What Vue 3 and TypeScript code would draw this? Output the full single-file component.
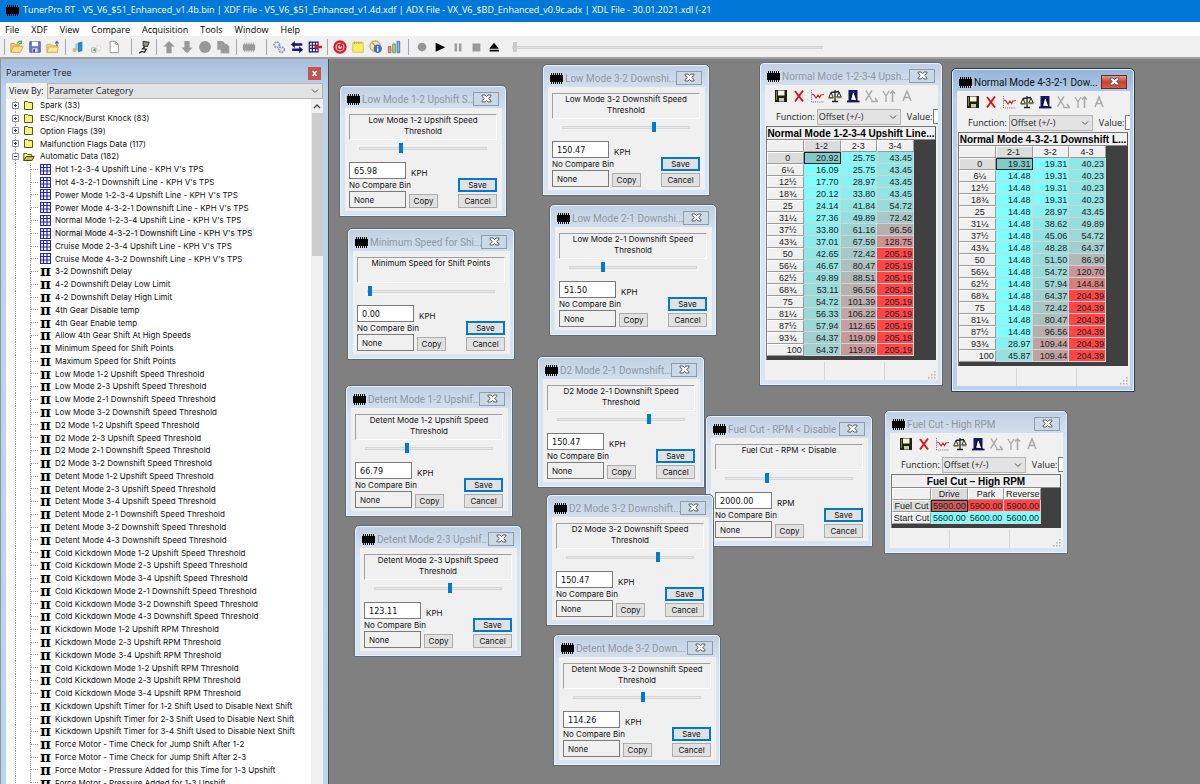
<script setup lang="ts">
import { ref } from 'vue'

interface Dialog {
  title: string
  label: string
  x: number
  y: number
  value: string
  unit: string
  slider: number
}

interface TableWindow {
  title: string
  caption: string
  x: number
  y: number
  active: boolean
  named: boolean
  columns: string[]
  rows: { label: string; values: number[] }[]
}

const menus = ['File', 'XDF', 'View', 'Compare', 'Acquisition', 'Tools', 'Window', 'Help']

const folders = [
  'Spark (33)',
  'ESC/Knock/Burst Knock (83)',
  'Option Flags (39)',
  'Malfunction Flags Data (117)',
]

const tableItems = [
  "Hot 1-2-3-4 Upshift Line - KPH V's TPS",
  "Hot 4-3-2-1 Downshift Line - KPH V's TPS",
  "Power Mode 1-2-3-4 Upshift Line - KPH V's TPS",
  "Power Mode 4-3-2-1 Downshift Line - KPH V's TPS",
  "Normal Mode 1-2-3-4 Upshift Line - KPH V's TPS",
  "Normal Mode 4-3-2-1 Downshift Line - KPH V's TPS",
  "Cruise Mode 2-3-4 Upshift Line - KPH V's TPS",
  "Cruise Mode 4-3-2 Downshift Line - KPH V's TPS",
]

const scalarItems = [
  '3-2 Downshift Delay',
  '4-2 Downshift Delay Low Limit',
  '4-2 Downshift Delay High Limit',
  '4th Gear Disable temp',
  '4th Gear Enable temp',
  'Allow 4th Gear Shift At High Speeds',
  'Minimum Speed for Shift Points',
  'Maximum Speed for Shift Points',
  'Low Mode 1-2 Upshift Speed Threshold',
  'Low Mode 2-3 Upshift Speed Threshold',
  'Low Mode 2-1 Downshift Speed Threshold',
  'Low Mode 3-2 Downshift Speed Threshold',
  'D2 Mode 1-2 Upshift Speed Threshold',
  'D2 Mode 2-3 Upshift Speed Threshold',
  'D2 Mode 2-1 Downshift Speed Threshold',
  'D2 Mode 3-2 Downshift Speed Threshold',
  'Detent Mode 1-2 Upshift Speed Threshold',
  'Detent Mode 2-3 Upshift Speed Threshold',
  'Detent Mode 3-4 Upshift Speed Threshold',
  'Detent Mode 2-1 Downshift Speed Threshold',
  'Detent Mode 3-2 Downshift Speed Threshold',
  'Detent Mode 4-3 Downshift Speed Threshold',
  'Cold Kickdown Mode 1-2 Upshift Speed Threshold',
  'Cold Kickdown Mode 2-3 Upshift Speed Threshold',
  'Cold Kickdown Mode 3-4 Upshift Speed Threshold',
  'Cold Kickdown Mode 2-1 Downshift Speed Threshold',
  'Cold Kickdown Mode 3-2 Downshift Speed Threshold',
  'Cold Kickdown Mode 4-3 Downshift Speed Threshold',
  'Kickdown Mode 1-2 Upshift RPM Threshold',
  'Kickdown Mode 2-3 Upshift RPM Threshold',
  'Kickdown Mode 3-4 Upshift RPM Threshold',
  'Cold Kickdown Mode 1-2 Upshift RPM Threshold',
  'Cold Kickdown Mode 2-3 Upshift RPM Threshold',
  'Cold Kickdown Mode 3-4 Upshift RPM Threshold',
  'Kickdown Upshift Timer for 1-2 Shift Used to Disable Next Shift',
  'Kickdown Upshift Timer for 2-3 Shift Used to Disable Next Shift',
  'Kickdown Upshift Timer for 3-4 Shift Used to Disable Next Shift',
  'Force Motor - Time Check for Jump Shift After 1-2',
  'Force Motor - Time Check for Jump Shift After 2-3',
  'Force Motor - Pressure Added for this Time for 1-3 Upshift',
  'Force Motor - Pressure Added for 1-3 Upshift',
]

const selected = ref(tableItems[5])

const dialogs = ref<Dialog[]>([
  { title: 'Low Mode 1-2 Upshift S...', label: 'Low Mode 1-2 Upshift Speed Threshold', x: 339, y: 85, value: '65.98', unit: 'KPH', slider: 32 },
  { title: 'Minimum Speed for Shi...', label: 'Minimum Speed for Shift Points', x: 347, y: 228, value: '0.00', unit: 'KPH', slider: 0 },
  { title: 'Detent Mode 1-2 Upshif...', label: 'Detent Mode 1-2 Upshift Speed Threshold', x: 345, y: 385, value: '66.79', unit: 'KPH', slider: 32 },
  { title: 'Detent Mode 2-3 Upshif...', label: 'Detent Mode 2-3 Upshift Speed Threshold', x: 354, y: 525, value: '123.11', unit: 'KPH', slider: 60 },
  { title: 'Low Mode 3-2 Downshi...', label: 'Low Mode 3-2 Downshift Speed Threshold', x: 542, y: 64, value: '150.47', unit: 'KPH', slider: 73 },
  { title: 'Low Mode 2-1 Downshi...', label: 'Low Mode 2-1 Downshift Speed Threshold', x: 549, y: 204, value: '51.50', unit: 'KPH', slider: 25 },
  { title: 'Fuel Cut - RPM < Disable', label: 'Fuel Cut - RPM < Disable', x: 705, y: 415, value: '2000.00', unit: 'RPM', slider: 32 },
  { title: 'D2 Mode 2-1 Downshift...', label: 'D2 Mode 2-1 Downshift Speed Threshold', x: 537, y: 356, value: '150.47', unit: 'KPH', slider: 73 },
  { title: 'D2 Mode 3-2 Downshift...', label: 'D2 Mode 3-2 Downshift Speed Threshold', x: 546, y: 494, value: '150.47', unit: 'KPH', slider: 73 },
  { title: 'Detent Mode 3-2 Down...', label: 'Detent Mode 3-2 Downshift Speed Threshold', x: 553, y: 634, value: '114.26', unit: 'KPH', slider: 55 },
])

const throttle = ['0', '6¼', '12½', '18¾', '25', '31¼', '37½', '43¾', '50', '56¼', '62½', '68¾', '75', '81¼', '87½', '93¾', '100']

const upshift = [
  [20.92, 25.75, 43.45], [16.09, 25.75, 43.45], [17.7, 28.97, 43.45], [20.12, 33.8, 43.45],
  [24.14, 41.84, 54.72], [27.36, 49.89, 72.42], [33.8, 61.16, 96.56], [37.01, 67.59, 128.75],
  [42.65, 72.42, 205.19], [46.67, 80.47, 205.19], [49.89, 88.51, 205.19], [53.11, 96.56, 205.19],
  [54.72, 101.39, 205.19], [56.33, 106.22, 205.19], [57.94, 112.65, 205.19], [64.37, 119.09, 205.19],
  [64.37, 119.09, 205.19],
]

const downshift = [
  [19.31, 19.31, 40.23], [14.48, 19.31, 40.23], [14.48, 19.31, 40.23], [14.48, 19.31, 40.23],
  [14.48, 28.97, 43.45], [14.48, 38.62, 49.89], [14.48, 45.06, 54.72], [14.48, 48.28, 64.37],
  [14.48, 51.5, 86.9], [14.48, 54.72, 120.7], [14.48, 57.94, 144.84], [14.48, 64.37, 204.39],
  [14.48, 72.42, 204.39], [14.48, 80.47, 204.39], [14.48, 96.56, 204.39], [28.97, 109.44, 204.39],
  [45.87, 109.44, 204.39],
]

const byThrottle = (data: number[][]) => throttle.map((label, i) => ({ label, values: data[i] }))

const tables: TableWindow[] = [
  {
    title: 'Normal Mode 1-2-3-4 Upsh...', caption: 'Normal Mode 1-2-3-4 Upshift Line...',
    x: 759, y: 62, active: false, named: false, columns: ['1-2', '2-3', '3-4'], rows: byThrottle(upshift),
  },
  {
    title: 'Normal Mode 4-3-2-1 Dow...', caption: 'Normal Mode 4-3-2-1 Downshift L...',
    x: 951, y: 68, active: true, named: false, columns: ['2-1', '3-2', '4-3'], rows: byThrottle(downshift),
  },
  {
    title: 'Fuel Cut - High RPM', caption: 'Fuel Cut – High RPM',
    x: 884, y: 410, active: false, named: true, columns: ['Drive', 'Park', 'Reverse'],
    rows: [
      { label: 'Fuel Cut', values: [5900, 5900, 5900] },
      { label: 'Start Cut', values: [5600, 5600, 5600] },
    ],
  },
]

// The canvas begins right of the tree panel and below the toolbar.
const place = (w: { x: number; y: number }) => ({ left: `${w.x - 329}px`, top: `${w.y - 59}px` })

// Cells run from cyan at the table's minimum to red at its maximum; the current cell is greyed.
function heat(t: TableWindow, value: number, current: boolean) {
  const all = t.rows.flatMap((r) => r.values)
  const lo = Math.min(...all)
  const share = (value - lo) / (Math.max(...all) - lo)
  const tone = (c: number) => Math.round(current ? c * 0.6 + 51 : c)
  const r = tone(128 + 127 * share)
  const g = tone(255 - 185 * share)
  return { backgroundColor: `rgb(${r}, ${g}, ${g})` }
}
</script>

<template>
  <div class="app">
    <svg class="defs" aria-hidden="true">
      <symbol id="chip" viewBox="0 0 13 11">
        <path d="M0 2h13v7H0z" fill="#000" />
        <path d="M1.500 0v11M3.500 0v11M5.500 0v11M7.500 0v11M9.500 0v11M11.500 0v11" stroke="#000" />
      </symbol>
      <symbol id="chev" viewBox="0 0 8 5"><path d="M1 .5l3 3 3-3" fill="none" stroke="#555" /></symbol>
      <symbol id="cross" viewBox="0 0 11 9">
        <path d="M1 1h3l1.500 1.700L7 1h3v1.300L7.600 4.500 10 6.700V8H7L5.500 6.300 4 8H1V6.700l2.400-2.200L1 2.300z" fill="#fff" stroke="#4b5360" stroke-width=".9" />
      </symbol>
    </svg>

    <header class="titlebar">
      <svg width="13" height="11"><use href="#chip" /></svg>
      <h1>TunerPro RT - VS_V6_$51_Enhanced_v1.4b.bin | XDF File - VS_V6_$51_Enhanced_v1.4d.xdf | ADX File - VX_V6_$BD_Enhanced_v0.9c.adx | XDL File - 30.01.2021.xdl (-21</h1>
    </header>

    <nav class="menubar"><button v-for="m in menus" :key="m" type="button">{{ m }}</button></nav>

    <div class="toolbar">
      <i class="sep s7"></i>
      <button type="button" aria-label="Open"><svg viewBox="0 0 16 16"><path d="M1 14V4h4l1 1.500h5V7" fill="#f3cf68" stroke="#c99b3b" /><path d="M1 14l3-7h11l-3 7z" fill="#fbe08a" stroke="#cf9f3c" /><path d="M8 4c2-3 4-3 5-1M13 .5V4h-3" fill="none" stroke="#4f9e4b" stroke-width="1.300" /></svg></button>
      <button type="button" aria-label="Save"><svg viewBox="0 0 16 16"><path d="M2 2h12v12H2z" fill="#6c78c8" stroke="#4c569f" /><path d="M4.500 2h7v5h-7z" fill="#fff" /><path d="M5 9.500h6V14H5z" fill="#d6d9e6" /><path d="M6 10.500h2V14H6z" fill="#414a80" /></svg></button>
      <button type="button" aria-label="Close file"><svg viewBox="0 0 16 16"><path d="M1 14V5h5l1 1.500h6V14z" fill="#f7d777" stroke="#d3a548" /><path d="M1 14l2-6h11l-1 6z" fill="#fde69d" stroke="#d8ad50" /><path d="M12.500 7V2M10.500 4l2-2.500 2 2.500" fill="none" stroke="#4a62bd" stroke-width="1.300" /></svg></button>
      <i class="sep s7"></i>
      <button type="button" aria-label="Compare bin"><svg viewBox="0 0 16 16"><path d="M8 3l5-1.500v11L8 14z" fill="#2d86c8" /><path d="M5 4l3-1v10l-3-2z" fill="#8fd0ee" /><path d="M2 9h4v5l-4-1z" fill="#d9b77a" /></svg></button>
      <button type="button" aria-label="Transfer"><svg viewBox="0 0 16 16"><path d="M3 9h5v5H3z" fill="#f6f6f6" stroke="#aaa" /><path d="M4 12l4 1-1-4z" fill="#4fae4c" /><path d="M9 6l4 1v5h-3z" fill="#fff" stroke="#d0d0d0" stroke-width=".8" /></svg></button>
      <button type="button" aria-label="New"><svg viewBox="0 0 16 16"><path d="M3.500 1.500h6l3.500 3.500v9.500H3.500z" fill="#fff" stroke="#8b8b8b" /><path d="M9.500 1.500V5H13" fill="none" stroke="#8b8b8b" /></svg></button>
      <i class="sep s12"></i>
      <button type="button" aria-label="Connect"><svg viewBox="0 0 16 16"><path d="M7 1.500l7 1-2 5-5-.5z" fill="#8f9477" stroke="#222" /><path d="M9 7.500L6.500 10l4 .5-2 3.500-3-1-3 2" fill="none" stroke="#222" stroke-width="1.500" /></svg></button>
      <i class="sep s7"></i>
      <button type="button" aria-label="Upload"><svg viewBox="0 0 16 16"><path d="M8 1l6.500 6.500H11V15H5V7.500H1.500z" fill="#999" /></svg></button>
      <button type="button" aria-label="Download"><svg viewBox="0 0 16 16"><path d="M8 15l6.500-6.500H11V1H5v7.500H1.500z" fill="#999" /></svg></button>
      <button type="button" aria-label="Verify"><svg viewBox="0 0 16 16"><circle cx="8" cy="8" r="6.800" fill="#999" /></svg></button>
      <button type="button" aria-label="Copy data"><svg viewBox="0 0 16 16"><path d="M1.500 1h6L10 3.500V11H1.500z" fill="#999" /><path d="M5.500 4.500H12l3 3V15H5.500z" fill="#999" stroke="#b4b4b4" stroke-width=".6" /></svg></button>
      <i class="sep s8"></i>
      <button type="button" aria-label="Chip"><svg viewBox="0 0 16 16"><path d="M1 5h14v7H1z" fill="#999" /><path d="M3 3v11M5.500 3v11M8 3v11M10.500 3v11M13 3v11" stroke="#999" /></svg></button>
      <i class="sep s12"></i>
      <button type="button" aria-label="Settings"><svg viewBox="0 0 16 16" fill="none" stroke="#8d98b5"><circle cx="5.500" cy="5.500" r="3" stroke-width="2" stroke-dasharray="2 .8" /><circle cx="11" cy="11" r="3" stroke-width="2" stroke-dasharray="2 .8" /><circle cx="11" cy="11" r="1.800" stroke="#b9cdf0" /></svg></button>
      <button type="button" aria-label="Swap"><svg viewBox="0 0 16 16"><path d="M1 5l4.500-4v2.800H14v2.700H5.500V9zM15 11l-4.500-4v2.800H2.500v2.700h8V15z" fill="#16167e" /></svg></button>
      <button type="button" aria-label="Table tools"><svg viewBox="0 0 16 16"><path d="M1.500 2.500h10v11h-10zM1.500 6h10M1.500 9.500h10M5 2.500v11M8.500 2.500v11" fill="#fff" stroke="#1d1d80" stroke-width="1.400" /><path d="M7 8l3.500-3.500v2.200H16v2.600h-5.500v2.200z" fill="#e01818" /></svg></button>
      <i class="sep s7"></i>
      <button type="button" aria-label="Target"><svg viewBox="0 0 16 16"><circle cx="8" cy="8" r="6.300" fill="#fff" stroke="#d8202a" stroke-width="2.600" /><circle cx="8" cy="8" r="3" fill="#fff" stroke="#d8202a" stroke-width="2" /><path d="M8 8l2-5" stroke="#d8202a" stroke-width="1.200" /></svg></button>
      <button type="button" aria-label="Notes"><svg viewBox="0 0 16 16"><path d="M2 3h12v11H2z" fill="#f8ee64" stroke="#d5c64a" /><path d="M4 1.500v3M6.500 1.500v3M9 1.500v3M11.500 1.500v3" stroke="#a9a04a" /></svg></button>
      <button type="button" aria-label="Information"><svg viewBox="0 0 16 16"><circle cx="7" cy="7" r="6" fill="#f4e7b6" stroke="#c6a24a" stroke-width="1.300" /><path d="M7 7L4 3" stroke="#c23" /><circle cx="10" cy="10" r="4.800" fill="#3d6ec9" /><path d="M10 7v1.500M10 9.500V13" stroke="#fff" stroke-width="1.600" /></svg></button>
      <button type="button" aria-label="Charts"><svg viewBox="0 0 16 16"><path d="M1.500 7.500h3v7h-3z" fill="#ef8d8d" stroke="#c85555" /><path d="M6.500 4.500h3v10h-3z" fill="#97dc8e" stroke="#4e9f49" /><path d="M11.500 1.500h3v13h-3z" fill="#92aef0" stroke="#4b65b8" /></svg></button>
      <i class="sep s10"></i>
      <button type="button" aria-label="Record"><svg viewBox="0 0 16 16"><circle cx="8" cy="8" r="5" fill="#969696" /></svg></button>
      <button type="button" aria-label="Play"><svg viewBox="0 0 16 16"><path d="M3 3l11 5.200L3 13.500z" fill="#000" /></svg></button>
      <button type="button" aria-label="Pause"><svg viewBox="0 0 16 16"><path d="M4 4h3v9H4zM9 4h3v9H9z" fill="#a0a0a0" /></svg></button>
      <button type="button" aria-label="Stop"><svg viewBox="0 0 16 16"><path d="M4 4h9v9H4z" fill="#999" /></svg></button>
      <button type="button" aria-label="Eject"><svg viewBox="0 0 16 16"><path d="M8 3l5.500 7h-11zM3 11h10.500v2H3z" fill="#000" /></svg></button>
      <input class="playback" type="range" value="0" aria-label="Playback position" />
    </div>

    <main class="workspace">
      <aside class="panel">
        <div class="panel-head">
          <h2>Parameter Tree</h2>
          <button type="button" aria-label="Close panel">x</button>
        </div>
        <div class="viewby">
          <label for="view-by">View By:</label>
          <span class="pick">
            <select id="view-by"><option>Parameter Category</option></select>
            <svg width="8" height="5"><use href="#chev" /></svg>
          </span>
        </div>
        <div class="tree-box">
          <ul class="tree">
            <li v-for="f in folders" :key="f" class="folder">
              <button type="button" class="toggle" aria-label="Expand"><svg viewBox="0 0 7 7"><path d="M.5.5h6v6h-6z" fill="#fff" stroke="#8a93a6" /><path d="M2 3.500h3M3.500 2v3" stroke="#23407c" /></svg></button>
              <svg class="ficon" viewBox="0 0 12 11"><path d="M1.500 9.500v-8h3l1 1h4v7z" fill="#f6f27a" stroke="#55551c" /></svg>
              <span>{{ f }}</span>
            </li>
            <li class="folder">
              <button type="button" class="toggle" aria-label="Collapse"><svg viewBox="0 0 7 7"><path d="M.5.5h6v6h-6z" fill="#fff" stroke="#8a93a6" /><path d="M2 3.500h3" stroke="#23407c" /></svg></button>
              <svg class="ficon" viewBox="0 0 12 11"><path d="M.8 9.500v-7h3l1 1h4v2" fill="#f6f27a" stroke="#55551c" /><path d="M.8 9.500l2.500-4h8l-2.300 4z" fill="#c9c136" stroke="#4a4a16" /></svg>
              <span>Automatic Data (182)</span>
            </li>
            <li v-for="t in tableItems" :key="t" class="leaf" @click="selected = t">
              <svg class="licon" viewBox="0 0 11 11"><path d="M.5.5h10v10H.5z" fill="#fff" /><path d="M.5 0v11M3.500 0v11M7 0v11M10.500 0v11M0 .5h11M0 3.500h11M0 7h11M0 10.500h11" stroke="#2424b4" stroke-width="1.200" /></svg>
              <span :class="{ chosen: selected === t }">{{ t }}</span>
            </li>
            <li v-for="s in scalarItems" :key="s" class="leaf" @click="selected = s">
              <b class="pi">π</b>
              <span :class="{ chosen: selected === s }">{{ s }}</span>
            </li>
          </ul>
          <div class="scroll">
            <svg width="8" height="5" viewBox="0 0 8 5"><path d="M1 4l3-3 3 3" fill="none" stroke="#444" stroke-width="1.300" /></svg>
            <i></i>
          </div>
        </div>
      </aside>

      <div class="canvas">
        <section v-for="(d, i) in dialogs" :key="d.title" class="win dialog" :style="place(d)">
          <header>
            <svg width="13" height="11"><use href="#chip" /></svg>
            <h3>{{ d.title }}</h3>
            <button type="button" class="x" aria-label="Close"><svg width="11" height="9"><use href="#cross" /></svg></button>
          </header>
          <div class="body">
            <p class="desc">{{ d.label }}</p>
            <input class="slide" type="range" :value="d.slider" :aria-label="d.label" />
            <div class="lower">
              <div class="fields">
                <div class="line">
                  <input :id="`val-${i}`" v-model="d.value" type="text" />
                  <label :for="`val-${i}`">{{ d.unit }}</label>
                </div>
                <label class="cmp" :for="`cmp-${i}`">No Compare Bin</label>
                <div class="line">
                  <input :id="`cmp-${i}`" type="text" value="None" readonly class="ro" />
                  <button type="button" class="btn copy">Copy</button>
                </div>
              </div>
              <div class="actions">
                <button type="button" class="btn save">Save</button>
                <button type="button" class="btn">Cancel</button>
              </div>
            </div>
          </div>
        </section>

        <section v-for="(t, i) in tables" :key="t.title" class="win grid" :class="{ active: t.active, named: t.named }" :style="place(t)">
          <header>
            <svg width="13" height="11"><use href="#chip" /></svg>
            <h3>{{ t.title }}</h3>
            <button type="button" class="x" aria-label="Close"><svg width="11" height="9"><use href="#cross" /></svg></button>
          </header>
          <div class="body">
            <div class="tools">
              <button type="button" aria-label="Save"><svg viewBox="0 0 14 14"><path d="M1 1h12v12H1z" fill="#20220e" /><path d="M4 1.500h6.500v5H4z" fill="#f3f3e6" /><path d="M2 2h1v9H2z" fill="#83853c" /><path d="M5 9h5v3.500H5z" fill="#c9c9c0" /></svg></button>
              <button type="button" aria-label="Cancel"><svg viewBox="0 0 14 14"><path d="M3 2l8 10.500M11 1.500L3 12.500" stroke="#e01010" stroke-width="1.900" fill="none" /></svg></button>
              <button type="button" aria-label="Graph"><svg viewBox="0 0 14 14" fill="none"><path d="M1.500 1v12H14" stroke="#777" stroke-dasharray="1.200 1" /><path d="M2 5l2 1L6 9l2-3 1.500 2.500L11 6l3-.5" stroke="#d32626" stroke-width="1.200" /></svg></button>
              <button type="button" aria-label="Compare"><svg viewBox="0 0 14 14" fill="none" stroke="#222"><path d="M7 1v11M3 3.500L11 2.500M4 12.500h6" stroke-width="1.300" /><path d="M3 3.500L.8 8.500h4.400zM11 3L8.800 8h4.400z" /><path d="M.6 9h4.800M8.600 8.500h4.800" stroke="#837f1c" stroke-width="1.600" /></svg></button>
              <button type="button" aria-label="Scale"><svg viewBox="0 0 14 14" fill="none"><path d="M2.500 1h9v11h-9z" fill="#15156c" /><path d="M4.500 11l2-7.500h1.500L11 12z" fill="#fff" stroke="#000" /><path d="M1 12.500h12.500" stroke="#15156c" stroke-width="1.800" /></svg></button>
              <button type="button" aria-label="Edit X axis"><svg viewBox="0 0 14 14" fill="none" stroke="#aaa"><path d="M2 1.500l6 10M8 1.500l-6.500 10" stroke-width="1.400" /><path d="M7 12.500h7M11 9l2 3" stroke-width="1.600" /></svg></button>
              <button type="button" aria-label="Edit Y axis"><svg viewBox="0 0 14 14" fill="none" stroke="#aaa"><path d="M1 2l3 5 3-5M4 7v6" stroke-width="1.400" /><path d="M10.500 13V2M8 4.500l2.500-2.500L13 4.500" stroke-width="1.600" /></svg></button>
              <button type="button" aria-label="Edit labels"><svg viewBox="0 0 14 14" fill="none" stroke="#aaa"><path d="M3 12L7 2l4 10M4.500 8.500h5" stroke-width="1.500" /></svg></button>
            </div>
            <div class="func">
              <label :for="`fn-${i}`">Function:</label>
              <span class="pick">
                <select :id="`fn-${i}`"><option>Offset (+/-)</option></select>
                <svg width="8" height="5"><use href="#chev" /></svg>
              </span>
              <label :for="`fv-${i}`">Value:</label>
              <input :id="`fv-${i}`" type="text" value="1.00" />
            </div>
            <div class="sheet">
              <h4>{{ t.caption }}</h4>
              <table>
                <thead>
                  <tr><th class="corner"></th><th v-for="(c, ci) in t.columns" :key="c" :class="{ cur: ci === 0 }">{{ c }}</th></tr>
                </thead>
                <tbody>
                  <tr v-for="(r, ri) in t.rows" :key="r.label">
                    <th scope="row" :class="{ cur: ri === 0, end: r.label === '100' }">{{ r.label }}</th>
                    <td v-for="(v, vi) in r.values" :key="vi" :class="{ sel: ri === 0 && vi === 0 }" :style="heat(t, v, ri === 0 && vi === 0)">{{ v.toFixed(2) }}</td>
                  </tr>
                </tbody>
              </table>
            </div>
            <footer>
              <span></span><span></span>
              <span><svg width="8" height="8" viewBox="0 0 8 8" fill="#b4b4b4"><path d="M6 0h1.500v1.500H6zM3 3h1.500v1.500H3zM6 3h1.500v1.500H6zM0 6h1.500v1.500H0zM3 6h1.500v1.500H3zM6 6h1.500v1.500H6z" /></svg></span>
            </footer>
          </div>
        </section>
      </div>
    </main>
  </div>
</template>

<style>
html,
body {
  height: 100%;
  margin: 0;
  overflow: hidden;
}
</style>

<style scoped>
.app {
  --ui: 'Open Sans', 'Noto Sans', sans-serif;
  --caption: Roboto, 'Noto Sans', sans-serif;
  --form: Inter, 'DejaVu Sans', sans-serif;
  --data: 'Liberation Sans', Arial, sans-serif;
  display: flex;
  flex-direction: column;
  height: 100vh;
  overflow: hidden;
  background: #808080;
  font: 9px/12px var(--ui);
  color: #222;
}
.app * { box-sizing: border-box; }
.defs { position: absolute; width: 0; height: 0; }
button, input, select { margin: 0; padding: 0; border: 0; border-radius: 0; outline: 0; background: none; font: inherit; color: inherit; }
h1, h2, h3, h4, p, ul { margin: 0; padding: 0; font: inherit; }
ul { list-style: none; }

.titlebar { display: flex; align-items: center; gap: 4px; flex: none; height: 22px; padding: 0 6px 2px; background: #0078d7; color: #fff; }
.titlebar h1 { font-size: 9px; white-space: nowrap; }
.menubar { display: flex; gap: 12px; flex: none; height: 14px; padding: 0 5px; background: #fff; line-height: 15px; color: #000; }

.toolbar { display: flex; align-items: center; flex: none; height: 23px; padding: 1px 0 0 1px; background: #f0f0f0; border-bottom: 2px solid #a0a0a0; }
.toolbar button { display: grid; place-items: center; width: 18px; height: 18px; flex: none; }
.toolbar button svg { width: 14px; height: 14px; }
.sep { display: flex; justify-content: center; flex: none; }
.sep::before { content: ''; width: 1px; height: 16px; background: #a8a8a8; }
.s7 { width: 7px; }
.s8 { width: 8px; }
.s10 { width: 10px; }
.s12 { width: 12px; padding-left: 4px; }
.playback { appearance: none; width: 311px; height: 12px; margin-left: 9px; }
.playback::-webkit-slider-runnable-track { height: 3px; background: #e0e0e0; border: 1px solid #d4d4d4; }
.playback::-webkit-slider-thumb { appearance: none; width: 4px; height: 10px; margin-top: -5px; background: #ccc; }

.workspace { display: flex; flex: 1; min-height: 0; }
.panel { display: flex; flex-direction: column; flex: none; width: 329px; padding: 2px 5px 0; border-right: 1px solid #44505c; border-left: 1px solid #8a99aa; background: linear-gradient(#a7bfdb, #bcd3ea 30px, #bcd6ee); }
.panel-head { display: flex; align-items: center; justify-content: space-between; height: 22px; padding: 2px 2px 0 0; flex: none; color: #17222e; }
.panel-head button { width: 13px; height: 13px; background: #c75050; color: #fff; font: bold 9px/10px var(--ui); }
.viewby { display: flex; align-items: stretch; flex: none; height: 16px; background: #f0f0f0; }
.viewby label { width: 41px; padding-left: 3px; line-height: 15px; }
.pick { position: relative; display: flex; flex: 1; }
.pick select { appearance: none; width: 100%; padding-left: 1px; border: 1px solid #b4b4b4; background: #e3e3e3; }
.pick svg { position: absolute; right: 4px; top: 50%; margin-top: -2px; }
.tree-box { display: flex; flex: 1; min-height: 0; background: #fff; }
/* The list runs a little below the window edge, so its last row is cut off. */
.tree { display: grid; grid-auto-rows: 1fr; flex: 1; margin-bottom: -5px; font: 8px/12px var(--form); color: #111; white-space: nowrap; min-width: 0; }
.tree li { display: flex; align-items: center; min-height: 0; height: 100%; background: repeating-linear-gradient(#999 0 1px, transparent 1px 2px) 9px 0 / 1px 100% no-repeat; }
.folder { padding-left: 6px; }
.toggle { width: 7px; height: 7px; margin-right: 4px; }
.toggle svg { display: block; width: 7px; height: 7px; }
.ficon { width: 12px; height: 11px; margin-right: 3px; }
.tree .leaf { padding-left: 34px; background: repeating-linear-gradient(#999 0 1px, transparent 1px 2px) 9px 0 / 1px 100% no-repeat, repeating-linear-gradient(#999 0 1px, transparent 1px 2px) 24px 0 / 1px 100% no-repeat, repeating-linear-gradient(90deg, #999 0 1px, transparent 1px 2px) 25px 6px / 8px 1px no-repeat; }
.licon { width: 11px; height: 11px; margin-right: 2px; }
.pi { width: 11px; margin-right: 2px; font: bold 15px/12px 'DejaVu Serif', serif; color: #000; }
.tree span { padding: 0 2px; line-height: 12px; }
.chosen { background: #f0f0f0; }
.scroll { display: flex; flex-direction: column; align-items: center; width: 12px; background: #f0f0f0; }
.scroll svg { margin: 5px 0 4px; }
.scroll i { width: 11px; height: 143px; background: #cdcdcd; }

.canvas { position: relative; flex: 1; overflow: hidden; background: #808080; }
.win { position: absolute; width: 168px; padding: 0 4px 5px 5px; border: 1px solid #5f6b78; border-radius: 5px 5px 0 0; background: linear-gradient(#c0d0e3, #d9e4f1 30px); box-shadow: inset 0 0 0 1px #eaf1f8; }
.win header { display: flex; align-items: center; height: 22px; padding: 5px 3px 0 2px; color: #8f98a3; }
.win h3 { flex: 1; margin-left: 2px; min-width: 0; font: 10px/12px var(--caption); white-space: nowrap; }
.win header svg { flex: none; }
.x { display: grid; place-items: center; flex: none; width: 26px; height: 14px; margin-top: -2px; border: 1px solid #8d9db0; background: #cbd8e6; }
.grid { width: 184px; }
.active { border-color: #23414f; background: linear-gradient(#93b4d9, #b9d1ea 30px); }
.active header { color: #111; }
.active .x { border-color: #6b2a24; background: linear-gradient(#e39a8c, #c8402c 50%, #d0604a); }
.body { background: #f0f0f0; }

.dialog .body { padding: 6px 5px 3px 4px; font-family: var(--form); font-size: 8px; line-height: 11px; color: #111; }
.desc { height: 26px; padding: 0 5px; border: 1px solid; border-color: #a0a0a0 #fff #fff #a0a0a0; text-align: center; }
.slide { appearance: none; display: block; width: 128px; height: 16px; margin: 0 auto; background: none; }
.slide::-webkit-slider-runnable-track { height: 3px; background: #e7eaea; border: 1px solid #d6d6d6; }
.slide::-webkit-slider-thumb { appearance: none; width: 4px; height: 10px; margin-top: -5px; background: #0078d7; }
.lower { display: flex; justify-content: space-between; margin-top: 6px; }
.line { display: flex; align-items: flex-end; gap: 3px; }
.line input { width: 57px; height: 17px; padding-left: 4px; border: 1px solid #7a7a7a; background: #fff; font: 9px/12px 'DejaVu Sans Condensed', 'DejaVu Sans', sans-serif; }
.line .ro { background: #f0f0f0; font: 8px/12px var(--form); }
.line label { padding-left: 2px; }
.cmp { display: block; height: 12px; line-height: 13px; }
.btn { height: 14px; width: 39px; border: 1px solid #adadad; background: #e1e1e1; line-height: 12px; }
.copy { width: 29px; }
.save { border: 2px solid #0078d7; line-height: 10px; }
.actions { display: flex; flex-direction: column; justify-content: flex-end; gap: 2px; }

.tools { display: flex; align-items: center; height: 22px; padding-left: 7px; }
.tools button { display: grid; place-items: center; width: 18px; height: 18px; }
.tools button svg { width: 14px; height: 14px; }
.func { display: flex; align-items: center; height: 19px; padding-left: 11px; overflow: hidden; white-space: nowrap; }
.func .pick { flex: none; width: 84px; height: 16px; margin: 0 6px 0 2px; }
.func input { width: 30px; height: 15px; flex: none; margin-left: 1px; padding-left: 3px; border: 1px solid #7a7a7a; background: #fff; }
.sheet { margin: 0 2px 0 1px; border-left: 1px solid #777; border-top: 1px solid #777; background: #404040; font-family: var(--data); padding-bottom: 4px; overflow: hidden; }
.sheet h4 { height: 13px; border-right: 1px solid #555; border-bottom: 1px solid #888; background: #f0f0f0; font-size: 10px; font-weight: bold; line-height: 13px; text-align: center; white-space: nowrap; color: #000; overflow: hidden; }
table { width: 147px; border-collapse: separate; border-spacing: 0; table-layout: fixed; background: #d0d0d0; font-size: 9px; line-height: 10px; color: #222; }
th, td { height: 12px; padding: 0 1px 0 0; white-space: nowrap; overflow: hidden; }
th { border: 1px solid; border-color: #fff #9a9a9a #9a9a9a #fff; background: #f0f0f0; font-weight: normal; text-align: center; line-height: 9px; }
tbody th { padding-left: 6px; }
th.end { text-align: right; }
th.cur { background: #dcdcdc; }
td { border: 1px solid #cfd6d6; border-width: 0 1px 1px 0; text-align: right; }
td.sel { border: 1px solid #222; line-height: 9px; }
.named table { width: 149px; }
.named .corner { width: 39px; }
.named th, .named tbody th { padding: 0; }
footer { display: flex; height: 20px; padding-top: 2px; }
footer span { width: 60px; border-right: 1px solid #d7d7d7; }
footer span:last-child { display: flex; flex: 1; align-items: flex-end; justify-content: flex-end; border: 0; padding: 0 2px 1px 0; }
</style>
